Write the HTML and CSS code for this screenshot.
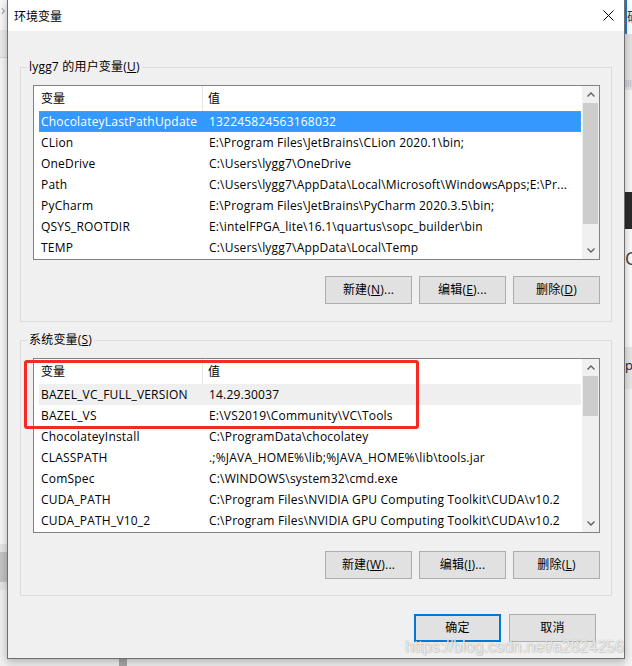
FILE: index.html
```html
<!DOCTYPE html>
<html lang="zh-CN">
<head>
<meta charset="utf-8">
<title>环境变量</title>
<link rel="stylesheet" href="styles.css">
</head>
<body>
<div class="screen">
  <div class="strip strip-left">
    <div class="sl-chevron">›</div>
    <div class="sl-band"></div>
    <div class="sl-fill"></div>
    <div class="sl-block"></div>
    <div class="sl-rest"></div>
  </div>

  <div class="center-col">
    <div class="dialog">
      <div class="titlebar">
        <span class="title">环境变量</span>
        <svg class="close" width="11" height="11" viewBox="0 0 11 11"><path d="M0.5 0.5 L10.5 10.5 M10.5 0.5 L0.5 10.5" stroke="#000" stroke-width="1" fill="none"/></svg>
      </div>

      <fieldset class="group group-user">
        <legend>lygg7 的用户变量(<u>U</u>)</legend>
        <div class="listview">
          <div class="lv-main">
            <div class="lv-header">
              <div class="hcol hcol1">变量</div>
              <div class="hcol hcol2">值</div>
            </div>
            <div class="lv-row selected"><span class="c1">ChocolateyLastPathUpdate</span><span class="c2">132245824563168032</span></div>
            <div class="lv-row"><span class="c1">CLion</span><span class="c2">E:\Program Files\JetBrains\CLion 2020.1\bin;</span></div>
            <div class="lv-row"><span class="c1">OneDrive</span><span class="c2">C:\Users\lygg7\OneDrive</span></div>
            <div class="lv-row"><span class="c1">Path</span><span class="c2">C:\Users\lygg7\AppData\Local\Microsoft\WindowsApps;E:\Pr...</span></div>
            <div class="lv-row"><span class="c1">PyCharm</span><span class="c2">E:\Program Files\JetBrains\PyCharm 2020.3.5\bin;</span></div>
            <div class="lv-row"><span class="c1">QSYS_ROOTDIR</span><span class="c2">E:\intelFPGA_lite\16.1\quartus\sopc_builder\bin</span></div>
            <div class="lv-row"><span class="c1">TEMP</span><span class="c2">C:\Users\lygg7\AppData\Local\Temp</span></div>
          </div>
          <div class="scrollbar">
            <div class="sb-btn"><svg width="8" height="5" viewBox="0 0 8 5"><path d="M0.5 4.5 L4 1 L7.5 4.5" stroke="#606060" stroke-width="1.4" fill="none"/></svg></div>
            <div class="sb-track"><div class="sb-thumb thumb-user"></div></div>
            <div class="sb-btn"><svg width="8" height="5" viewBox="0 0 8 5"><path d="M0.5 0.5 L4 4 L7.5 0.5" stroke="#606060" stroke-width="1.4" fill="none"/></svg></div>
          </div>
        </div>
        <div class="btnrow">
          <button class="btn">新建(<u>N</u>)...</button>
          <button class="btn">编辑(<u>E</u>)...</button>
          <button class="btn">删除(<u>D</u>)</button>
        </div>
      </fieldset>

      <fieldset class="group group-sys">
        <legend>系统变量(<u>S</u>)</legend>
        <div class="listview">
          <div class="lv-main">
            <div class="lv-header">
              <div class="hcol hcol1">变量</div>
              <div class="hcol hcol2">值</div>
            </div>
            <div class="lv-row inactive"><span class="c1">BAZEL_VC_FULL_VERSION</span><span class="c2">14.29.30037</span></div>
            <div class="lv-row"><span class="c1">BAZEL_VS</span><span class="c2">E:\VS2019\Community\VC\Tools</span></div>
            <div class="lv-row"><span class="c1">ChocolateyInstall</span><span class="c2">C:\ProgramData\chocolatey</span></div>
            <div class="lv-row"><span class="c1">CLASSPATH</span><span class="c2">.;%JAVA_HOME%\lib;%JAVA_HOME%\lib\tools.jar</span></div>
            <div class="lv-row"><span class="c1">ComSpec</span><span class="c2">C:\WINDOWS\system32\cmd.exe</span></div>
            <div class="lv-row"><span class="c1">CUDA_PATH</span><span class="c2">C:\Program Files\NVIDIA GPU Computing Toolkit\CUDA\v10.2</span></div>
            <div class="lv-row"><span class="c1">CUDA_PATH_V10_2</span><span class="c2">C:\Program Files\NVIDIA GPU Computing Toolkit\CUDA\v10.2</span></div>
          </div>
          <div class="scrollbar">
            <div class="sb-btn"><svg width="8" height="5" viewBox="0 0 8 5"><path d="M0.5 4.5 L4 1 L7.5 4.5" stroke="#606060" stroke-width="1.4" fill="none"/></svg></div>
            <div class="sb-track"><div class="sb-thumb thumb-sys"></div></div>
            <div class="sb-btn"><svg width="8" height="5" viewBox="0 0 8 5"><path d="M0.5 0.5 L4 4 L7.5 0.5" stroke="#606060" stroke-width="1.4" fill="none"/></svg></div>
          </div>
        </div>
        <div class="btnrow btnrow-sys">
          <button class="btn">新建(<u>W</u>)...</button>
          <button class="btn">编辑(<u>I</u>)...</button>
          <button class="btn">删除(<u>L</u>)</button>
        </div>
      </fieldset>

      <div class="dlg-buttons">
        <button class="btn btn-default">确定</button>
        <button class="btn">取消</button>
      </div>
    </div>
    <div class="bottom-strip">
      <div class="bs-gap"></div>
      <div class="bs-block"></div>
    </div>
  </div>

  <div class="strip strip-right">
    <div class="sr-btn">确</div>
    <div class="sr-gray"><span>lll</span></div>
    <div class="sr-space1"></div>
    <div class="sr-dark"></div>
    <div class="sr-c">C</div>
    <div class="sr-space2"></div>
    <div class="sr-band">p</div>
    <div class="sr-rest"></div>
  </div>

  <div class="redbox"></div>
  <div class="watermark">https://blog.csdn.net/a2824256</div>
</div>
</body>
</html>
```

FILE: styles.css
```css
* { box-sizing: border-box; }
html, body { margin: 0; padding: 0; }
body {
  width: 632px;
  height: 666px;
  overflow: hidden;
  font-family: "Open Sans", "Noto Sans CJK SC", sans-serif;
  font-size: 12px;
  letter-spacing: 0.2px;
  color: #000;
}
.screen {
  position: relative;
  width: 632px;
  height: 666px;
  display: flex;
  background: #f2f2f2;
  overflow: hidden;
}

/* background window strips */
.strip { width: 7px; display: flex; flex-direction: column; overflow: hidden; letter-spacing: 0; }
.strip-left { background: #f4f4f4; }
.sl-chevron { height: 30px; color: #a0a0a0; font-size: 14px; line-height: 20px; padding-left: 1px; background: #f7f7f7; }
.sl-band { height: 28px; background: #e9e9e9; border-bottom: 1px solid #d8d8d8; }
.sl-fill { height: 486px; background: #f5f5f5; }
.sl-block { height: 46px; background: linear-gradient(#e4e4e4 0 18%, #c3c3c3 18% 82%, #e4e4e4 82%); }
.sl-rest { flex: 1; background: #efefef; }

.strip-right { flex: 1; background: #f7f7f7; }
.sr-btn { height: 34px; background: #fff; border-left: 2px solid #1c7fd6; color: #1c3a5a; font-size: 13px; line-height: 32px; font-family: "Noto Sans CJK SC", sans-serif; white-space: nowrap; }
.sr-gray { height: 56px; background: #e3e3e3; color: #b8b8b8; font-size: 9px; line-height: 100px; overflow: hidden; }
.sr-space1 { height: 102px; background: #f6f6f6; }
.sr-dark { height: 37px; background: #2b2b2b; }
.sr-c { height: 38px; color: #444; font-size: 18px; line-height: 58px; background: #fafafa; }
.sr-space2 { height: 80px; background: #fafafa; }
.sr-band { height: 42px; background: #e6e6e6; color: #1a1a3a; font-size: 13px; line-height: 36px; }
.sr-rest { flex: 1; background: #f3f3f3; }

.center-col { width: 618px; display: flex; flex-direction: column; }
.bottom-strip { flex: 1; display: flex; background: #ececec; }
.bs-gap { width: 112px; }
.bs-block { width: 8px; background: #a6a6a6; }

/* dialog */
.dialog {
  position: relative;
  z-index: 1;
  width: 618px;
  height: 659px;
  background: #f0f0f0;
  border: 1px solid #6f6f6f;
  border-top: none;
  box-shadow: 0 2px 8px rgba(0,0,0,0.28);
  display: flex;
  flex-direction: column;
}
.titlebar {
  height: 31px;
  background: #fff;
  display: flex;
  align-items: center;
  justify-content: space-between;
  padding: 0 10px 0 6px;
  flex: none;
}
.title { font-family: "Noto Sans CJK SC", sans-serif; font-size: 12px; line-height: 16px; letter-spacing: 0; }
.close { display: block; margin-top: -1px; }

.group {
  margin: 0 12px;
  border: 1px solid #dcdcdc;
  padding: 10px 11px 17px 6px;
  min-width: 0;
  flex: none;
}
.group-user { margin-top: 28px; }
.group-sys { margin-top: 10px; padding-bottom: 16px; }
legend {
  padding: 0 2px;
  line-height: 16px;
  font-size: 12px;
}
u { text-decoration: underline; text-underline-offset: 1px; }

.listview {
  margin-left: 6px;
  height: 175px;
  border: 1px solid #828282;
  background: #fff;
  display: flex;
}
.lv-main { width: 548px; display: flex; flex-direction: column; }
.lv-header { height: 25px; display: flex; flex: none; }
.hcol { line-height: 24px; letter-spacing: 0; }
.hcol1 { width: 169px; padding-left: 7px; border-right: 1px solid #e5e5e5; font-family: "Noto Sans CJK SC", sans-serif; }
.hcol2 { padding-left: 5px; font-family: "Noto Sans CJK SC", sans-serif; }
.lv-row {
  height: 21px;
  margin: 0 1px 0 5px;
  display: flex;
  align-items: center;
  white-space: nowrap;
  flex: none;
}
.lv-row .c1 { width: 168px; padding-left: 2px; flex: none; overflow: hidden; }
.lv-row .c2 { flex: 1; padding-left: 2px; overflow: hidden; text-overflow: ellipsis; padding-right: 3px; }
.lv-row.selected { background: #3399ff; color: #fff; outline: 1px dotted #d9822b; outline-offset: -1px; }
.lv-row.inactive { background: #efefef; }

.scrollbar {
  width: 17px;
  background: #f0f0f0;
  display: flex;
  flex-direction: column;
}
.sb-btn { height: 17px; display: flex; align-items: center; justify-content: center; flex: none; }
.sb-track { flex: 1; }
.sb-thumb { margin: 0 1px; background: #cdcdcd; }
.thumb-user { height: 121px; }
.thumb-sys { height: 40px; }

.btnrow { display: flex; justify-content: flex-end; gap: 7px; margin-top: 16px; }
.btnrow-sys { margin-top: 18px; }
.btn {
  width: 87px;
  height: 28px;
  margin: 0;
  padding: 0;
  background: #e1e1e1;
  border: 1px solid #adadad;
  font-family: "Open Sans", "Noto Sans CJK SC", sans-serif;
  font-size: 12px;
  letter-spacing: 0.2px;
  color: #000;
  line-height: 16px;
}
.dlg-buttons { display: flex; justify-content: flex-end; gap: 8px; margin: 18px 28px 0 0; }
.btn-default { border: 2px solid #0078d7; }

/* overlays */
.redbox {
  position: absolute;
  left: 24px;
  top: 360px;
  width: 395px;
  height: 69px;
  border: 3px solid #f52a22;
  border-radius: 3px;
  z-index: 5;
}
.watermark {
  position: absolute;
  left: 405px;
  top: 637px;
  z-index: 6;
  font-family: "Liberation Sans", sans-serif;
  font-size: 16px;
  line-height: 20px;
  letter-spacing: 0;
  color: rgba(255,255,255,0.8);
  text-shadow: 0 0 1px rgba(120,120,120,0.7), 1px 1px 1px rgba(0,0,0,0.12);
  white-space: nowrap;
}
```
